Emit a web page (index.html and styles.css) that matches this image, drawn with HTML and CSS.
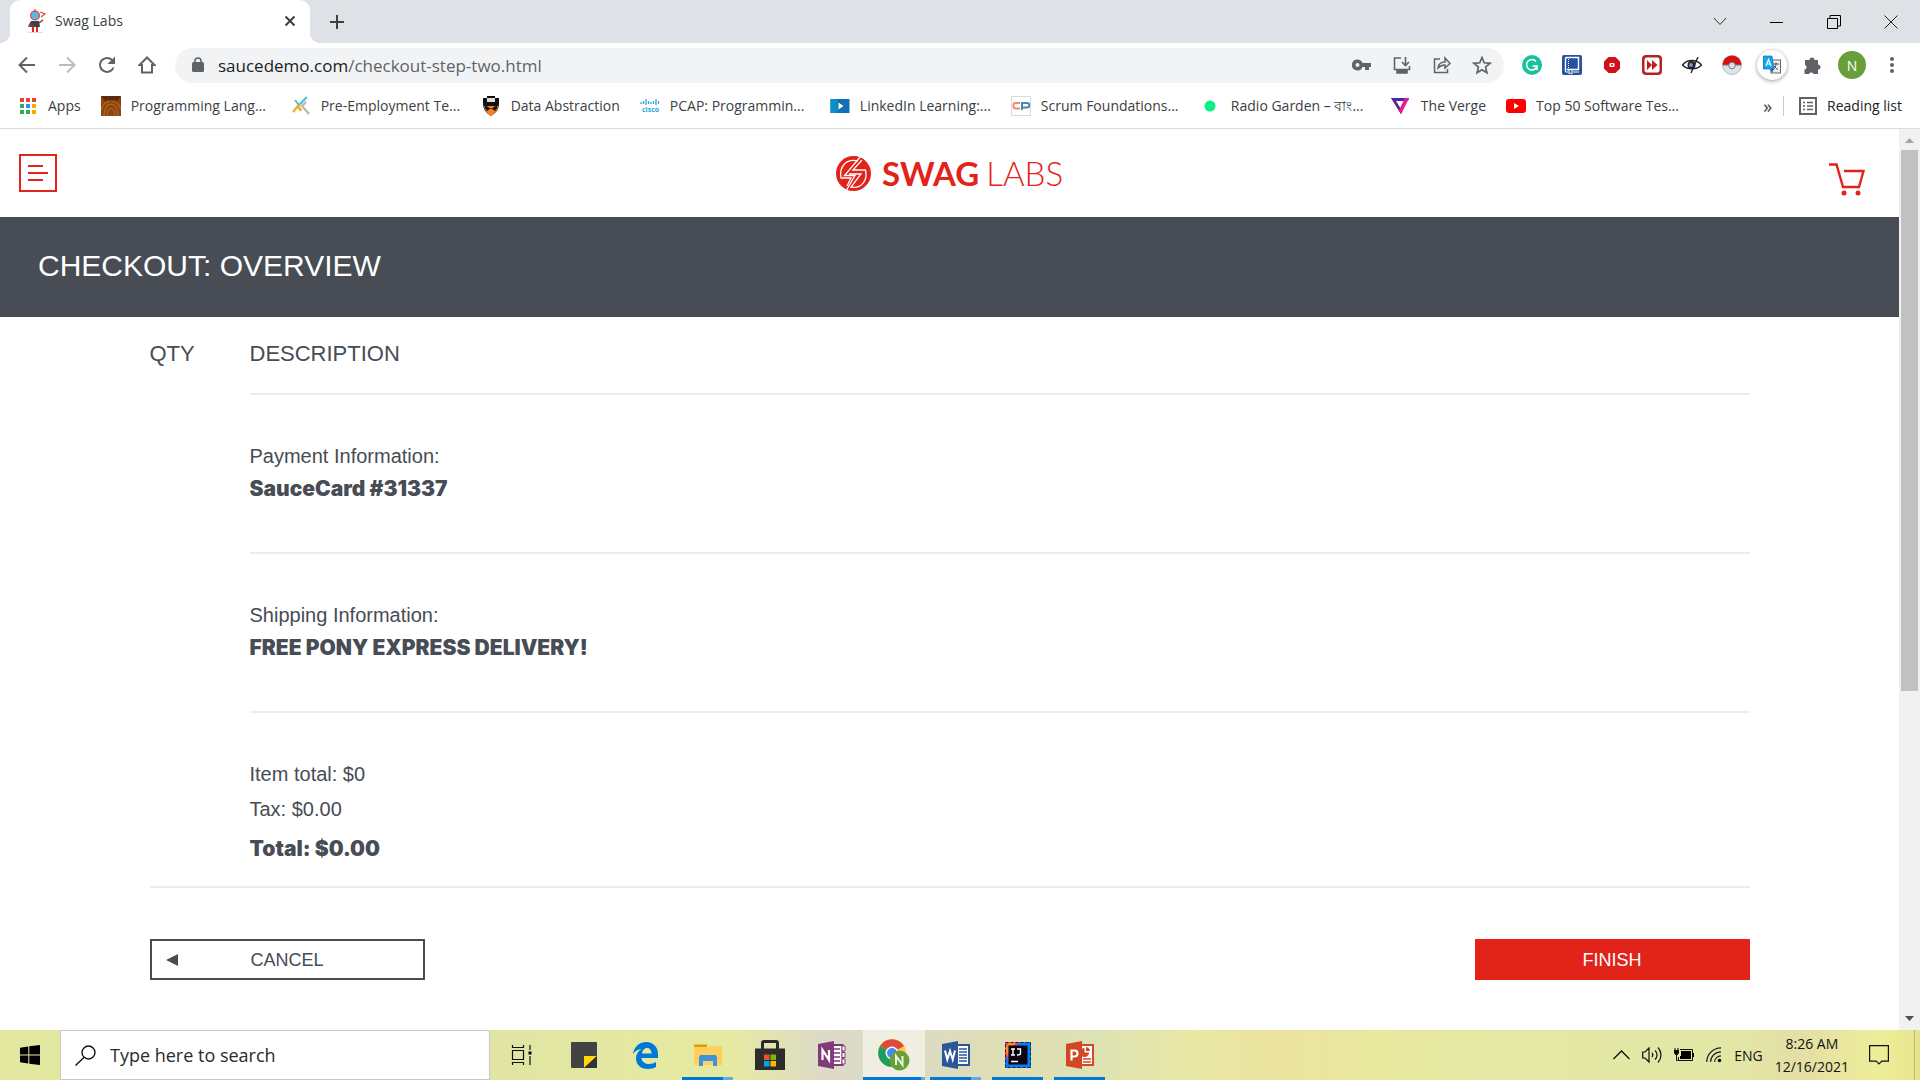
FILE: index.html
```html
<!DOCTYPE html>
<html lang="en">
<head>
<meta charset="utf-8">
<title>Swag Labs</title>
<link rel="stylesheet" href="styles.css">
</head>
<body>
<div class="screen">
  <header class="chrome">
    <div class="tabstrip">
      <div class="tab">
        <svg class="favicon" width="20" height="24" viewBox="0 0 20 24"><path d="M8 3V0" stroke="#a33" stroke-width="1"/><circle cx="8" cy="6.500" r="5" fill="#e2433a"/><circle cx="8" cy="6.500" r="3.800" fill="#5bb8e8"/><path d="M4 12h8l1 6H3z" fill="#3c4048"/><path d="M4 13l-2 4h5M12 14l4-3" stroke="#8a3a3a" stroke-width="1.500" fill="none"/><path d="M13 3l5 2-4 3" stroke="#e2433a" stroke-width="1.200" fill="none"/><path d="M5 18h2v5H5zM9 18h2v5H9z" fill="#e2231a"/><path d="M1 23.500h15" stroke="#ddd"/></svg>
        <span class="tab-title">Swag Labs</span>
        <button class="icon-btn" aria-label="Close tab"><svg width="12" height="12" viewBox="0 0 12 12"><path d="M1.500 1.500l9 9M10.500 1.500l-9 9" stroke="#3c4043" stroke-width="2"/></svg></button>
      </div>
      <button class="icon-btn new-tab" aria-label="New tab"><svg width="16" height="16" viewBox="0 0 16 16"><path d="M8 1v14M1 8h14" stroke="#3c4043" stroke-width="2"/></svg></button>
      <div class="window-controls">
        <button class="icon-btn" aria-label="Search tabs"><svg width="14" height="9" viewBox="0 0 14 9"><path d="M1 1l6 6.500L13 1" fill="none" stroke="#333"/></svg></button>
        <button class="icon-btn" aria-label="Minimize"><svg width="14" height="14" viewBox="0 0 14 14"><path d="M0 7.500h13" stroke="#000"/></svg></button>
        <button class="icon-btn" aria-label="Restore"><svg width="14" height="14" viewBox="0 0 14 14"><path d="M.5 3.500h10v10H.5zM3 3V.5h10.500v10.500H11" fill="none" stroke="#000"/></svg></button>
        <button class="icon-btn" aria-label="Close"><svg width="14" height="14" viewBox="0 0 14 14"><path d="M.5.5l13 13M13.500.5l-13 13" stroke="#222"/></svg></button>
      </div>
    </div>

    <div class="toolbar">
      <button class="icon-btn slot" aria-label="Back"><svg width="18" height="18" viewBox="0 0 18 18"><path d="M17 9H2M9 1.500L1.500 9 9 16.500" fill="none" stroke="#5f6368" stroke-width="2"/></svg></button>
      <button class="icon-btn slot" aria-label="Forward"><svg width="18" height="18" viewBox="0 0 18 18"><path d="M1 9h15M9 1.500L16.500 9 9 16.500" fill="none" stroke="#babcbe" stroke-width="2"/></svg></button>
      <button class="icon-btn slot" aria-label="Reload"><svg width="18" height="18" viewBox="0 0 18 18"><path d="M15.500 11.500A7 7 0 1 1 14 4" fill="none" stroke="#5f6368" stroke-width="2"/><path d="M17 .5V8H9.500z" fill="#5f6368"/></svg></button>
      <button class="icon-btn slot" aria-label="Home"><svg width="18" height="18" viewBox="0 0 18 18"><path d="M4 16.500V9H1.500L9 1.500 16.500 9H14v7.500z" fill="none" stroke="#5f6368" stroke-width="2"/></svg></button>
      <div class="omnibox">
        <svg width="12" height="16" viewBox="0 0 12 16"><rect x="0" y="5" width="12" height="10" rx="1.500" fill="#5f6368"/><path d="M3 6V4a3 3 0 0 1 6 0v2" fill="none" stroke="#5f6368" stroke-width="1.600"/></svg>
        <a class="url" href="#"><span class="host">saucedemo.com</span>/checkout-step-two.html</a>
        <button class="icon-btn slot" aria-label="Passwords"><svg width="20" height="12" viewBox="0 0 20 12"><path fill-rule="evenodd" d="M5.500.5a5.500 5.500 0 0 1 5 3.500H19v4h-2v3h-4V8h-2.500a5.500 5.500 0 1 1-5-7.500zm0 3.500a2 2 0 1 0 0 4 2 2 0 0 0 0-4z" fill="#5f6368"/></svg></button>
        <button class="icon-btn slot" aria-label="Install"><svg width="18" height="18" viewBox="0 0 18 18"><path d="M8 2H1.500v11.500h15V10" fill="none" stroke="#5f6368" stroke-width="1.600"/><path d="M4 14h10v3H4zM12.500 1v8" fill="#5f6368" stroke="#5f6368" stroke-width="1.600"/><path d="M9 6l3.500 3.500L16 6" fill="none" stroke="#5f6368" stroke-width="1.600"/></svg></button>
        <button class="icon-btn slot" aria-label="Share"><svg width="18" height="18" viewBox="0 0 18 18"><path d="M7 3H1.500v13.500h13V13M5 12c.5-4 3-6 7-6V2l5 5.500-5 4.500V9c-3 0-5 1-7 3z" fill="none" stroke="#5f6368" stroke-width="1.500"/></svg></button>
        <button class="icon-btn slot" aria-label="Bookmark"><svg width="20" height="20" viewBox="0 0 20 20"><path d="M10 2.500l2.200 5.300 5.800.5-4.400 3.800 1.300 5.600-4.900-3-4.900 3 1.300-5.600L2 8.300l5.800-.5z" fill="none" stroke="#5f6368" stroke-width="1.700"/></svg></button>
      </div>
      <div class="extensions">
        <button class="icon-btn slot" aria-label="Grammarly"><svg width="20" height="20" viewBox="0 0 20 20"><circle cx="10" cy="10" r="10" fill="#15c39a"/><path d="M14 6.500A5.300 5.300 0 1 0 15 11h-4.500M15 11v4" fill="none" stroke="#fff" stroke-width="1.600"/></svg></button>
        <button class="icon-btn slot" aria-label="Notebook"><svg width="20" height="20" viewBox="0 0 20 20"><rect width="20" height="20" rx="2" fill="#2551a0"/><path d="M3.500 16V3.500a1 1 0 0 1 1-1h12v12H5" fill="none" stroke="#fff" stroke-width="1.400"/><path d="M6.500 4v10" stroke="#fff" stroke-dasharray="1 1"/><path d="M3.500 15.500v1.500h3M11 17h6M7 15v4l1.500-1 1.500 1v-4" stroke="#fff" fill="none"/></svg></button>
        <button class="icon-btn slot" aria-label="Blocker"><svg width="18" height="18" viewBox="0 0 18 18"><path d="M5.500 1h7L17 5.500v7L12.500 17h-7L1 12.500v-7z" fill="#d0111b"/><rect x="6.500" y="7" width="5" height="4" rx="1" fill="#fff"/><circle cx="9" cy="9" r="1" fill="#d0111b"/></svg></button>
        <button class="icon-btn slot" aria-label="Speed"><svg width="20" height="20" viewBox="0 0 20 20"><rect width="20" height="20" rx="4" fill="#b9201e"/><rect x="2.500" y="2.500" width="15" height="15" rx="2" fill="#fff"/><path d="M5 5l5 5-5 5zM10 5l5.500 5-5.500 5z" fill="#b9201e"/></svg></button>
        <button class="icon-btn slot" aria-label="Privacy"><svg width="20" height="16" viewBox="0 0 20 16"><path d="M.5 8C5 2 15 2 19.500 8 15 13 5 13 .5 8z" fill="#fff" stroke="#222" stroke-width="1.300"/><circle cx="9.500" cy="8" r="4" fill="#223"/><circle cx="9" cy="8" r="2" fill="#79c"/><path d="M16 0L9 16" stroke="#222" stroke-width="1.400"/></svg></button>
        <button class="icon-btn slot" aria-label="Pokeball"><svg width="20" height="20" viewBox="0 0 20 20"><circle cx="10" cy="10" r="9.500" fill="#dbe4e8" stroke="#999" stroke-width=".6"/><path d="M.5 10a9.500 9.500 0 0 1 19 0z" fill="#d80f10"/><path d="M1 10h18" stroke="#777"/><circle cx="10" cy="10.500" r="3.300" fill="#dde" stroke="#777"/></svg></button>
        <button class="icon-btn slot" aria-label="Translate"><span class="ext-active"><svg width="18" height="20" viewBox="0 0 18 20"><rect x="8" y="5" width="9.500" height="13" fill="#eee" stroke="#666"/><path d="M10 9h6M13 7.500V9c0 3-1.500 4.500-3 6M11 11l4 4" stroke="#555" fill="none"/><path d="M0 1h9l2 13H0z" fill="#17a5ef" stroke="#1a5b9a" stroke-width=".6"/><path d="M7 14h4l-2 4z" fill="#0d6fc0"/><path d="M3 11l2.500-6.500L8 11M4 9h3" fill="none" stroke="#fff" stroke-width="1.200"/></svg></span></button>
        <button class="icon-btn slot" aria-label="Extensions"><svg width="19" height="19" viewBox="0 0 19 19"><path d="M2 4h4.500a2.500 2.500 0 1 1 5 0H15v4.500a2.500 2.500 0 1 1 0 5V18h-4.500a2.500 2.500 0 0 0-4.500 0H1.500v-4.500a2.300 2.300 0 0 0 .5-4.500z" fill="#5f6368"/></svg></button>
        <button class="avatar" aria-label="Profile">N</button>
        <button class="icon-btn slot" aria-label="Menu"><svg width="4" height="18" viewBox="0 0 4 18"><g fill="#5f6368"><circle cx="2" cy="3" r="2"/><circle cx="2" cy="9" r="2"/><circle cx="2" cy="15" r="2"/></g></svg></button>
      </div>
    </div>

    <nav class="bookmarks">
      <a class="bookmark" href="#"><svg height="18" viewBox="0 0 18 18"><path d="M1 1h4v4H1zM7 1h4v4H7zM13 1h4v4h-4z" fill="#ea4335"/><path d="M1 7h4v4H1zM1 13h4v4H1zM7 13h4v4H7z" fill="#34a853"/><path d="M7 7h4v4H7z" fill="#2a8cff"/><path d="M13 7h4v4h-4zM13 13h4v4h-4z" fill="#fbab05"/></svg><span>Apps</span></a>
      <a class="bookmark" href="#"><svg height="20" viewBox="0 0 20 20"><rect width="20" height="20" fill="#8b4510"/><path d="M0 0h20l-5 6-2-3-3 4-3-4-2 3z" fill="#5a2a0c"/><path d="M3 20c0-16 14-16 14 0M6 20c0-10 8-10 8 0M0 14c2-6 4-8 10-9M20 14c-2-6-4-8-10-9" fill="none" stroke="#b5651d" stroke-width="1.200"/></svg><span class="cut">Programming Lang...</span></a>
      <a class="bookmark" href="#"><svg height="20" viewBox="0 0 18 20"><path d="M3 4l4 5 8-8" fill="none" stroke="#46c3cf" stroke-width="2"/><path d="M1 16l5-6 3 5" fill="none" stroke="#f9ab2e" stroke-width="2.500"/><path d="M14 6l-4 4 7 8" fill="none" stroke="#bbb" stroke-width="2.500"/></svg><span class="cut">Pre-Employment Te...</span></a>
      <a class="bookmark" href="#"><svg height="20" viewBox="0 0 18 20"><path d="M1 2h4V0h8v2h4v5c0 6-3 10-8 13C4 17 1 13 1 7z" fill="#111"/><path d="M5 2h8v4H5z" fill="#ddd"/><path d="M2 10h14c-1 5-3 7-7 10-4-3-6-5-7-10z" fill="#f58025"/><path d="M3 9l6 4 6-4v3l-2 3-4-3-4 3-2-3z" fill="#111"/></svg><span>Data Abstraction</span></a>
      <a class="bookmark" href="#"><svg height="14" viewBox="0 0 20 14"><path d="M1 3v2M3.500 2v3M6 0v6M8.500 2v3M11 3v2M13.500 2v3M16 0v6M18.500 2v3" stroke="#2aa5d8" stroke-width="1.300"/><text x="2" y="13" class="cisco">cisco</text></svg><span class="cut">PCAP: Programmin...</span></a>
      <a class="bookmark" href="#"><svg height="14" viewBox="0 0 19 14"><rect width="19" height="14" fill="#1070b3"/><path d="M0 0h7v14H0z" fill="#0a8fc9"/><path d="M8 3.500l5 3.500-5 3.500z" fill="#fff"/></svg><span>LinkedIn Learning:...</span></a>
      <a class="bookmark" href="#"><svg height="20" viewBox="0 0 20 20"><rect x=".5" y=".5" width="19" height="19" fill="#fff" stroke="#d5dee5"/><path d="M9 7H4.500a2 2 0 0 0-2 2v1.500a2 2 0 0 0 2 2H9" fill="none" stroke="#ee8a70" stroke-width="2"/><path d="M11 14V7h5a2 2 0 0 1 0 4.500h-5" fill="none" stroke="#4c87ab" stroke-width="2"/></svg><span class="cut">Scrum Foundations...</span></a>
      <a class="bookmark" href="#"><svg height="12" viewBox="0 0 20 12"><circle cx="9" cy="6" r="5.500" fill="#0cf083"/></svg><span class="cut">Radio Garden – বাং...</span></a>
      <a class="bookmark" href="#"><svg height="18" viewBox="0 0 20 18"><path d="M0 1h18L10 17z" fill="#ec1b8d"/><path d="M0 1h18l-1 3H6l5 10-1 3z" fill="#4a2a9e"/><path d="M5 4h10l-5 8z" fill="#fff"/><path d="M18 1l-8 16-2-4 6-12z" fill="#ec1b8d"/></svg><span>The Verge</span></a>
      <a class="bookmark" href="#"><svg height="14" viewBox="0 0 20 14"><rect width="20" height="14" rx="3" fill="#f00"/><path d="M8 4l5 3-5 3z" fill="#fff"/></svg><span>Top 50 Software Tes...</span></a>
      <button class="more" aria-label="More bookmarks">»</button>
      <a class="bookmark reading" href="#"><svg height="18" viewBox="0 0 18 18"><path d="M1 1h16v16H1z" fill="none" stroke="#5f6368" stroke-width="2"/><path d="M4 5.500h2M4 9h2M4 12.500h2M8 5.500h6M8 9h6M8 12.500h6" stroke="#5f6368" stroke-width="1.500"/></svg><span>Reading list</span></a>
    </nav>
  </header>

  <div class="viewport">
    <div class="page">
      <div class="site-header">
        <button class="menu" aria-label="Open Menu"><svg width="20" height="18" viewBox="0 0 20 18"><path d="M0 2h15M0 9h20M0 16h15" stroke="#e2231a" stroke-width="2"/></svg></button>
        <div class="logo">
          <svg width="35" height="35" viewBox="0 0 35 35"><circle cx="17.500" cy="17.500" r="17.500" fill="#e2231a"/><path d="M25 0L8.500 19.500H19L10 35" fill="none" stroke="#fff" stroke-width="1.300"/><path d="M22 5C10 2 3 11 5 22h10l-4 8" fill="none" stroke="#fff" stroke-width="1.300"/><path d="M26 4l-9 10h12.500C32 25 25 33 15 31l10-13H13" fill="none" stroke="#fff" stroke-width="1.300"/></svg>
          <span class="wordmark"><b>SWAG</b><span>LABS</span></span>
        </div>
        <a class="cart" href="#" aria-label="Cart"><svg width="36" height="33" viewBox="0 0 36 33"><path d="M0 1.500h7.500L14 24h16L34.500 8H15" fill="none" stroke="#e2231a" stroke-width="2.400"/><circle cx="15" cy="30" r="2.500" fill="#e2231a"/><circle cx="29" cy="30" r="2.500" fill="#e2231a"/></svg></a>
      </div>
      <h1 class="title">CHECKOUT: OVERVIEW</h1>
      <main class="summary">
        <div class="labels"><span class="qty">QTY</span><span>DESCRIPTION</span></div>
        <section class="info"><p>Payment Information:</p><p class="strong">SauceCard #31337</p></section>
        <section class="info"><p>Shipping Information:</p><p class="strong">FREE PONY EXPRESS DELIVERY!</p></section>
        <section class="info totals"><p>Item total: $0</p><p>Tax: $0.00</p><p class="strong">Total: $0.00</p></section>
        <div class="actions">
          <button class="btn cancel"><svg width="12" height="12" viewBox="0 0 12 12"><path d="M0 6l12-6v12z" fill="#474c55"/></svg><span>CANCEL</span></button>
          <button class="btn finish">FINISH</button>
        </div>
      </main>
    </div>
    <div class="scrollbar">
      <svg width="9" height="5" viewBox="0 0 9 5"><path d="M0 5l4.500-5L9 5z" fill="#a3a3a3"/></svg>
      <div class="track"><div class="thumb"></div></div>
      <svg width="9" height="5" viewBox="0 0 9 5"><path d="M0 0l4.500 5L9 0z" fill="#505050"/></svg>
    </div>
  </div>

  <footer class="taskbar">
    <button class="start" aria-label="Start"><svg width="20" height="20" viewBox="0 0 20 20"><path d="M0 2.700l8.300-1.200v8H0zM9.300 1.300L20 0v9.500H9.300zM0 10.500h8.300v8L0 17.300zM9.300 10.500H20V20L9.300 18.700z"/></svg></button>
    <label class="search"><svg width="21" height="21" viewBox="0 0 21 21"><circle cx="13.500" cy="7.500" r="6.500" fill="none" stroke="#111" stroke-width="1.400"/><path d="M9 12.500L.5 20.500" stroke="#111" stroke-width="1.400"/></svg><input type="text" placeholder="Type here to search" aria-label="Search"></label>
    <div class="apps">
      <button class="app" aria-label="Task View"><svg width="22" height="20" viewBox="0 0 22 20"><path d="M1.500 5.500h11v9h-11zM1.500 0v2.500h11V0M1.500 20v-2.500h11V20M19 0v5M19 11v9" fill="none" stroke="#111" stroke-width="1.200"/><path d="M17.500 6.500h3v3h-3z"/></svg></button>
      <button class="app" aria-label="Sticky Notes"><svg width="26" height="26" viewBox="0 0 26 26"><rect width="26" height="26" rx="1" fill="#434343"/><path d="M13 14h13L13 26z" fill="#ffd70a"/><path d="M26 14v12H13z" fill="#333"/></svg></button>
      <button class="app" aria-label="Edge"><svg width="26" height="27" viewBox="0 0 26 27"><path d="M0 12C1 5 6 0 13 0c8 0 12 6 12 12v4H8.500c.5 4 4 6 7.500 6 3 0 5-.8 7-2v5c-2 1.300-5 2-8 2C7 27 3 22 3 16.500c0-4 2-7.500 5.500-9.500C5 7.500 2 9 0 12zm9-.5h9.500C18.500 8 16.500 6 14 6c-2.800 0-4.600 2.500-5 5.500z" fill="#0078d7"/></svg></button>
      <button class="app open multi" aria-label="File Explorer"><svg width="28" height="24" viewBox="0 0 28 24"><path d="M0 1.500h13V5H0z" fill="#e19a00"/><path d="M0 4h14l2-1h12v19H0z" fill="#ffd15c"/><path d="M5 23V14a2 2 0 0 1 2-2h14a2 2 0 0 1 2 2v9h-4v-5H9v5z" fill="#3d94da"/></svg></button>
      <button class="app" aria-label="Store"><svg width="30" height="31" viewBox="0 0 30 31"><path d="M7.500 10V3a1.500 1.500 0 0 1 1.500-1.500h12A1.500 1.500 0 0 1 22.500 3v7" fill="none" stroke="#292929" stroke-width="3"/><path d="M0 8.500h30V30H0z" fill="#2c2c2c"/><path d="M9 14.500h5.500V20H9z" fill="#f25022"/><path d="M15.500 14.500H21V20h-5.500z" fill="#7fba00"/><path d="M9 21h5.500v5.500H9z" fill="#00a4ef"/><path d="M15.500 21H21v5.500h-5.500z" fill="#ffb900"/></svg></button>
      <button class="app" aria-label="OneNote"><svg width="28" height="28" viewBox="0 0 28 28"><path d="M14 4h10.500v20H14z" fill="#fff" stroke="#80397b" stroke-width="2"/><path d="M24 5h3v5h-3zM24 11.500h3v5h-3zM24 18h3v5h-3z" fill="#fff" stroke="#80397b"/><path d="M16 8h6M16 12h6M16 16h6M16 20h6" stroke="#80397b" stroke-width="1.500"/><path d="M0 3l16-3v28L0 25z" fill="#80397b"/><path d="M4.500 19V9l6.500 10V9" fill="none" stroke="#fff" stroke-width="2.200"/></svg></button>
      <button class="app open multi active" aria-label="Chrome"><svg width="32" height="32" viewBox="0 0 32 32"><circle cx="14" cy="14" r="14" fill="#ffcd40"/><path d="M14 14L2 7a14 14 0 0 1 24 0z" fill="#dd4b3e"/><path d="M14 14L2 7a14 14 0 0 0 11 21l6-10z" fill="#1aa15f"/><circle cx="14" cy="14" r="6.500" fill="#fff"/><circle cx="14" cy="14" r="5" fill="#4587f3"/><circle cx="21.500" cy="21.500" r="10" fill="#689f38"/><path d="M18 26v-9l6.500 9v-9" fill="none" stroke="#eef5e6" stroke-width="2"/></svg></button>
      <button class="app open multi" aria-label="Word"><svg width="28" height="28" viewBox="0 0 28 28"><path d="M15 4h12v20H15z" fill="#fff" stroke="#2b579a" stroke-width="2"/><path d="M17 8h8M17 11h8M17 14h8M17 17h8M17 20h8" stroke="#2b579a" stroke-width="1.400"/><path d="M0 3l16-3v28L0 25z" fill="#2b579a"/><path d="M3 9.500l2.300 9L8 10l2.700 8.500 2.300-9" fill="none" stroke="#fff" stroke-width="2"/></svg></button>
      <button class="app open" aria-label="IntelliJ IDEA"><svg width="26" height="26" viewBox="0 0 26 26"><rect width="26" height="26" fill="#087cfa"/><path d="M0 12L0 0h14L4 20z" fill="#fe2d80"/><path d="M0 5l5-5h6L2 14z" fill="#fc8a2a"/><rect x=".5" y=".5" width="25" height="25" fill="none" stroke="#222" stroke-dasharray="3 2"/><rect x="3.500" y="3.500" width="19" height="19" fill="#080410"/><path d="M6 7h4M8 7v6M6 13h4M12 7h3.500v4.500c0 1-1 1.500-3.500 1.500M6 19.500h7" fill="none" stroke="#fff" stroke-width="1.400"/></svg></button>
      <button class="app open" aria-label="PowerPoint"><svg width="28" height="28" viewBox="0 0 28 28"><path d="M15 4h12v20H15z" fill="#fff" stroke="#d24726" stroke-width="2"/><path d="M17 18h8M17 21h8" stroke="#d24726" stroke-width="1.500"/><path d="M18.500 7v4.500H23a4.500 4.500 0 1 1-4.500-4.500zM20 6a4.500 4.500 0 0 1 4 4h-4z" fill="#d24726"/><path d="M0 3l16-3v28L0 25z" fill="#d24726"/><path d="M5.500 19.500V9.500h3a2.800 2.800 0 0 1 0 6h-3" fill="none" stroke="#fff" stroke-width="2.200"/></svg></button>
    </div>
    <div class="tray">
      <button class="icon-btn" aria-label="Hidden icons"><svg width="17" height="10" viewBox="0 0 17 10"><path d="M.5 9l8-8 8 8" fill="none" stroke="#111" stroke-width="1.300"/></svg></button>
      <button class="icon-btn" aria-label="Volume"><svg width="20" height="18" viewBox="0 0 20 18"><path d="M.7 6H3l4-4v14l-4-4H.7zM10 7a3 3 0 0 1 0 4M13 4.500a6 6 0 0 1 0 9M16 1.500a11 11 0 0 1 0 15" fill="none" stroke="#111" stroke-width="1.200"/></svg></button>
      <button class="icon-btn" aria-label="Battery"><svg width="20" height="14" viewBox="0 0 20 14"><path d="M6 1.500h12.500v11H4.500V9" fill="none" stroke="#111"/><path d="M7 3h10v8H6V8h1zM19 5h1v4h-1zM0 2h5v3L3.500 7h-2L0 5z"/><path d="M1 0v3M4 0v3M2.500 6v6.500H5" stroke="#111" fill="none"/></svg></button>
      <button class="icon-btn" aria-label="Wi-Fi"><svg width="16" height="16" viewBox="0 0 16 16"><path d="M.7 15A14.500 14.500 0 0 1 15 .8M4.500 15A10.500 10.500 0 0 1 15 4.800M8.500 15A6.500 6.500 0 0 1 15 8.800" fill="none" stroke="#222" stroke-width="1.200"/><circle cx="13.500" cy="13.500" r="1.800"/></svg></button>
      <span>ENG</span>
      <div class="clock"><span>8:26 AM</span><span>12/16/2021</span></div>
      <button class="icon-btn notify" aria-label="Notifications"><svg width="20" height="20" viewBox="0 0 20 20"><path d="M.6.6h18.800v15.600h-6.600L10 19l-2.800-2.800H.6z" fill="none" stroke="#111" stroke-width="1.200"/></svg></button>
    </div>
  </footer>
</div>
</body>
</html>
```
FILE: styles.css
```css
* { box-sizing: border-box; }
body { margin: 0; font-family: "Open Sans", "Noto Sans", sans-serif; color: #3c4043; }
button, input { font: inherit; color: inherit; border: 0; padding: 0; background: none; }
a { color: inherit; text-decoration: none; }
p, h1 { margin: 0; }
svg { display: block; flex: none; }

.screen { display: flex; flex-direction: column; min-height: 100vh; }
.icon-btn { display: grid; place-items: center; flex: none; }
.slot { width: 40px; height: 32px; }

/* Browser frame */
.tabstrip { display: flex; align-items: center; height: 43px; padding: 0 1px 0 10px; background: #dee1e6; }
.tab { position: relative; display: flex; align-items: center; gap: 8px; width: 300px; height: 43px; padding: 0 14px 2px 17px; background: #fff; border-radius: 10px 10px 0 0; font-size: 14px; }
.tab::before, .tab::after { content: ""; position: absolute; bottom: 0; width: 10px; height: 10px; }
.tab::before { left: -10px; background: radial-gradient(circle at 0 0, transparent 10px, #fff 10px); }
.tab::after { right: -10px; background: radial-gradient(circle at 100% 0, transparent 10px, #fff 10px); }
.tab-title { flex: 1; }
.new-tab { margin-left: 19px; }
.window-controls { display: flex; margin-left: auto; }
.window-controls .icon-btn { width: 57px; height: 36px; }

.toolbar { display: flex; align-items: center; height: 44px; padding: 0 8px 0 7px; background: #fff; }
.omnibox { flex: 1; display: flex; align-items: center; height: 35px; margin-left: 8px; padding: 0 2px 0 17px; background: #f1f3f4; border-radius: 18px; }
.url { flex: 1; margin-left: 14px; font-size: 17px; color: #5f6368; }
.host { color: #202124; }
.extensions { display: flex; align-items: center; margin-left: 8px; }
.ext-active { display: grid; place-items: center; width: 30px; height: 30px; border-radius: 50%; background: #fff; box-shadow: 0 1px 4px #0006; }
.avatar { width: 28px; height: 28px; margin: 0 6px; border-radius: 50%; background: #689f38; color: #fff; font-size: 14px; }

.bookmarks { display: flex; align-items: center; gap: 20px; height: 42px; padding: 0 18px 4px 18px; border-bottom: 1px solid #dadce0; background: #fff; font-size: 14px; line-height: 20px; white-space: nowrap; }
.bookmark { display: flex; align-items: center; gap: 10px; height: 20px; }
.bookmark svg { width: 20px; }
.bookmark span { height: 20px; }
.cut { width: 140px; }
.more { margin-left: auto; font-size: 18px; }
.reading { gap: 9px; margin-left: -9px; padding-left: 14px; border-left: 1px solid #c8cacd; color: #202124; }
.cisco { font: bold 7px "Open Sans", sans-serif; fill: #2aa5d8; }

/* Web page */
.viewport { flex: 1; display: flex; background: #fff; }
.page { flex: 1; font-family: "Liberation Sans", Arial, sans-serif; color: #474c55; }
.site-header { display: grid; grid-template-columns: 1fr auto 1fr; align-items: center; height: 88px; padding: 0 34px 0 19px; }
.menu { display: grid; place-items: center; width: 38px; height: 38px; border: 2px solid #e2231a; }
.logo { display: flex; align-items: center; gap: 11px; margin-left: 15px; color: #e2231a; }
.wordmark { display: flex; gap: 7px; font: 300 33px/36px Lato, sans-serif; }
.wordmark b { font-weight: 700; }
.cart { justify-self: end; padding-top: 12px; }
.title { padding: 31px 38px 33px; background: #474c55; color: #fff; font-size: 30px; line-height: 36px; font-weight: 400; }
.summary { max-width: 1600px; margin: 0 auto; font-size: 20px; line-height: 24px; }
.labels { display: flex; padding: 23px 0 25px; font-size: 22px; line-height: 28px; }
.qty { width: 100px; }
.info { margin-left: 100px; padding: 47px 0 45px; border-top: 2px solid #ededed; line-height: 28px; }
.strong { padding: 5px 0 4px; font: 900 21px/28px Inter, sans-serif; }
.totals { padding-bottom: 19px; }
.totals p { margin-bottom: 7px; }
.totals .strong { margin-bottom: 0; }
.actions { display: flex; justify-content: space-between; padding: 51px 0 50px; border-top: 2px solid #ededed; }
.btn { width: 275px; height: 41px; font-size: 18px; }
.cancel { display: grid; grid-template-columns: 12px 1fr 12px; align-items: center; padding: 0 14px; border: 2px solid #474c55; }
.finish { background: #e2231a; color: #fff; }

.scrollbar { display: flex; flex-direction: column; align-items: center; width: 21px; padding: 9px 0; background: #f1f1f1; }
.track { flex: 1; width: 17px; padding: 7px 0; }
.thumb { height: 63%; background: #c1c1c1; }

/* Taskbar */
.taskbar { display: flex; height: 50px; background: linear-gradient(90deg, #e3e8a0 0, #e0e5a4 26%, #e6eaa0 38%, #dcdac8 43%, #dcdcc0 49%, #e0deb4 52%, #dde2b4 57%, #e8e8a4 62%, #ebe3a0 66%, #e8e89e 72%, #e3e8a4 78%, #e2e7a6 90%, #e5dea5 94%, #eeee98 98%, #e6e48c); color: #111; }
.start { display: grid; place-items: center; width: 60px; }
.search { display: flex; align-items: center; gap: 14px; width: 430px; padding-left: 14px; background: #fff; border: 1px solid #c8c8c8; }
.search input { flex: 1; font-size: 18px; outline: 0; }
.search input::placeholder { color: #2b2b2b; opacity: 1; }
.apps { display: flex; padding-left: 1px; }
.app { display: grid; place-items: center; width: 62px; position: relative; }
.app.active { background: #f6f5ecc0; }
.app.open::after { content: ""; position: absolute; bottom: 0; left: 5px; right: 6px; height: 3px; background: #0078d7; }
.app.multi::after { background: linear-gradient(90deg, #0078d7 80%, #62aae2 80%); }
.app.active::after { left: 0; right: 0; background: linear-gradient(90deg, #0078d7 93%, #62aae2 93%); }
.tray { display: flex; align-items: center; gap: 12px; margin: 0 5px 0 auto; padding-right: 25px; border-right: 1px solid #bcbc80; font-size: 14px; }
.clock { display: flex; flex-direction: column; align-items: center; line-height: 23px; }
.notify { margin-left: 8px; }
```
